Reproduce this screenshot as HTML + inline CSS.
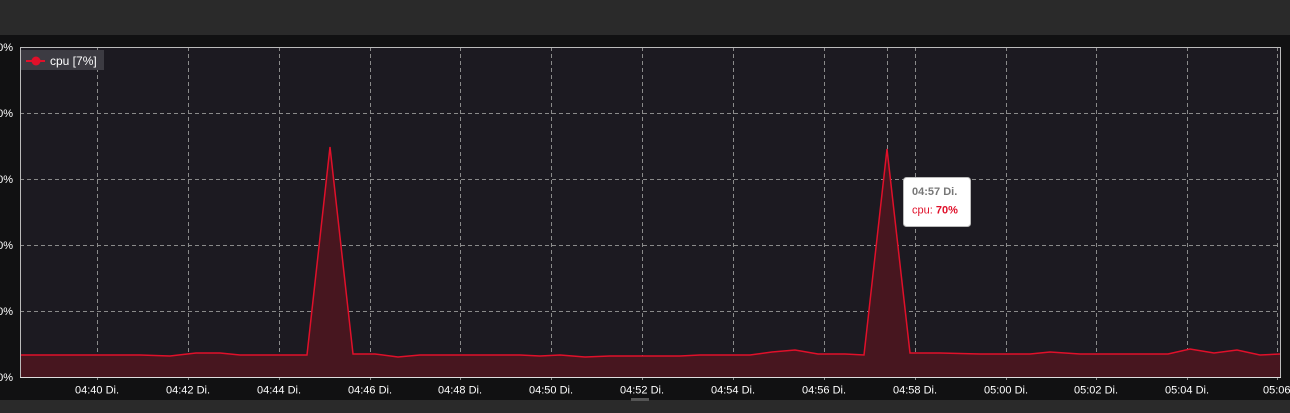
<!DOCTYPE html>
<html><head><style>
body{margin:0;width:1290px;height:413px;background:#111112;overflow:hidden;font-family:"Liberation Sans",sans-serif;}
</style></head><body>
<svg width="1290" height="413" xmlns="http://www.w3.org/2000/svg" style="position:absolute;left:0;top:0">
<rect x="0" y="0" width="1290" height="35" fill="#2a2a2a"/>
<rect x="0" y="35" width="1290" height="365" fill="#111112"/>
<rect x="0" y="400" width="1290" height="13" fill="#2a2a2a"/>
<rect x="631" y="398" width="18" height="3" fill="#555"/>
<rect x="20" y="47" width="1260" height="330" fill="#1c1a21"/>
<g stroke="#8a8a8a" stroke-width="1" stroke-dasharray="4,3">
<line x1="97.5" y1="47" x2="97.5" y2="382"/><line x1="188.5" y1="47" x2="188.5" y2="382"/>
<line x1="279.5" y1="47" x2="279.5" y2="382"/><line x1="370.5" y1="47" x2="370.5" y2="382"/>
<line x1="460.5" y1="47" x2="460.5" y2="382"/><line x1="551.5" y1="47" x2="551.5" y2="382"/>
<line x1="642.5" y1="47" x2="642.5" y2="382"/><line x1="733.5" y1="47" x2="733.5" y2="382"/>
<line x1="824.5" y1="47" x2="824.5" y2="382"/><line x1="915.5" y1="47" x2="915.5" y2="382"/>
<line x1="1006.5" y1="47" x2="1006.5" y2="382"/><line x1="1096.5" y1="47" x2="1096.5" y2="382"/>
<line x1="1187.5" y1="47" x2="1187.5" y2="382"/><line x1="1277.5" y1="47" x2="1277.5" y2="382"/>
<line x1="887.5" y1="47" x2="887.5" y2="377"/>
<line x1="20" y1="113.5" x2="1280" y2="113.5"/><line x1="20" y1="179.5" x2="1280" y2="179.5"/>
<line x1="20" y1="245.5" x2="1280" y2="245.5"/><line x1="20" y1="311.5" x2="1280" y2="311.5"/>
</g>
<polygon fill="#47161f" points="20,377 20,355 60,355 100,355 140,355 170,356 196,353 220,353 240,355 280,355 307,355 330,147 353,354 375,354 398,357 420,355 460,355 520,355 540,356 560,355 585,357 610,356 680,356 700,355 750,355 772,352 795,350 818,354 845,354 864,355 887,149 910,353 940,353 980,354 1030,354 1050,352 1080,354 1100,354 1120,354 1140,354 1168,354 1190,349 1214,353 1237,350 1260,355 1280,354 1280,377"/>
<polyline fill="none" stroke="#e0102a" stroke-width="1.5" points="20,355 60,355 100,355 140,355 170,356 196,353 220,353 240,355 280,355 307,355 330,147 353,354 375,354 398,357 420,355 460,355 520,355 540,356 560,355 585,357 610,356 680,356 700,355 750,355 772,352 795,350 818,354 845,354 864,355 887,149 910,353 940,353 980,354 1030,354 1050,352 1080,354 1100,354 1120,354 1140,354 1168,354 1190,349 1214,353 1237,350 1260,355 1280,354"/>
<path d="M20.5 377 V47.5 H1280.5 V377" fill="none" stroke="#bbb" stroke-width="1"/>
<line x1="20" y1="377.5" x2="1281" y2="377.5" stroke="#ddd" stroke-width="1"/>
<g fill="#fff" font-size="11" text-anchor="end">
<text x="13" y="51">100%</text><text x="13" y="117">80%</text><text x="13" y="183">60%</text>
<text x="13" y="249">40%</text><text x="13" y="315">20%</text><text x="13" y="381">0%</text>
</g>
<g fill="#fff" font-size="11" text-anchor="middle">
<text x="97" y="393.5">04:40 Di.</text><text x="188" y="393.5">04:42 Di.</text><text x="279" y="393.5">04:44 Di.</text>
<text x="370" y="393.5">04:46 Di.</text><text x="460" y="393.5">04:48 Di.</text><text x="551" y="393.5">04:50 Di.</text>
<text x="642" y="393.5">04:52 Di.</text><text x="733" y="393.5">04:54 Di.</text><text x="824" y="393.5">04:56 Di.</text>
<text x="915" y="393.5">04:58 Di.</text><text x="1006" y="393.5">05:00 Di.</text><text x="1096" y="393.5">05:02 Di.</text>
<text x="1187" y="393.5">05:04 Di.</text><text x="1285" y="393.5">05:06 Di.</text>
</g>
<rect x="21" y="50" width="83" height="20" fill="#3c3b42"/>
<line x1="26" y1="61" x2="45" y2="61" stroke="#e0102a" stroke-width="2"/>
<circle cx="36" cy="61" r="4.5" fill="#e0102a"/>
<text x="50" y="65" fill="#fff" font-size="12">cpu [7%]</text>
<rect x="903.5" y="177.5" width="67" height="49" rx="3" fill="#fff" stroke="#bbb"/>
<text x="912" y="195" fill="#777" font-size="11" font-weight="bold">04:57 Di.</text>
<text x="912" y="213.5" fill="#e0102a" font-size="11">cpu: <tspan font-weight="bold">70%</tspan></text>
</svg>
</body></html>
